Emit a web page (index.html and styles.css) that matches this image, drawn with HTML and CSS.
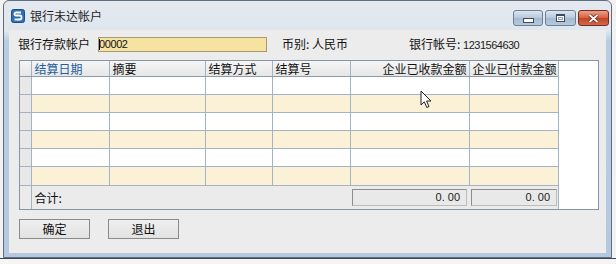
FILE: index.html
```html
<!DOCTYPE html>
<html>
<head>
  <title>银行未达帐户</title>
  <link rel="stylesheet" href="styles.css">
</head>
<body>

  <div class="window">
    <div class="titlebar">
      <svg class="app-icon" width="14" height="14" viewBox="0 0 14 14">
        <rect x="0.5" y="0.5" width="13" height="13" rx="2" fill="#2f6fb5" stroke="#1d4f86"/>
        <path d="M10 3.5 H5 Q3.5 3.5 3.5 5 Q3.5 6.5 5 6.5 H9 Q10.5 6.5 10.5 8.5 Q10.5 10.5 9 10.5 H3.5" fill="none" stroke="#fff" stroke-width="1.8"/>
      </svg>
      <span class="title">银行未达帐户</span>
      <div class="caption-buttons">
        <div class="cap min"><span></span></div>
        <div class="cap max"><span></span></div>
        <div class="cap close">
          <svg width="11" height="9" viewBox="0 0 11 9">
            <path d="M1.5 1 L9.5 8 M9.5 1 L1.5 8" stroke="#5a1a0c" stroke-width="3.2"/>
            <path d="M1.5 1 L9.5 8 M9.5 1 L1.5 8" stroke="#fff" stroke-width="1.8"/>
          </svg>
        </div>
      </div>
    </div>

    <div class="client">
      <div class="toolbar">
        <label>银行存款帐户</label>
        <div class="account"><span class="caret"></span>00002</div>
        <span class="currency">币别: 人民币</span>
        <span class="bank-no">银行帐号: <span class="num">1231564630</span></span>
      </div>

      <div class="grid">
        <table class="sheet">
          <colgroup>
            <col style="width: 11px">
            <col style="width: 78px">
            <col style="width: 96px">
            <col style="width: 67px">
            <col style="width: 78px">
            <col style="width: 119px">
            <col style="width: 89px">
          </colgroup>
          <tr class="head">
            <td class="rh"></td>
            <td class="active">结算日期</td>
            <td>摘要</td>
            <td>结算方式</td>
            <td>结算号</td>
            <td class="right">企业已收款金额</td>
            <td class="right">企业已付款金额</td>
          </tr>
          <tr><td class="rh"></td><td></td><td></td><td></td><td></td><td></td><td></td></tr>
          <tr class="alt"><td class="rh"></td><td></td><td></td><td></td><td></td><td></td><td></td></tr>
          <tr><td class="rh"></td><td></td><td></td><td></td><td></td><td></td><td></td></tr>
          <tr class="alt"><td class="rh"></td><td></td><td></td><td></td><td></td><td></td><td></td></tr>
          <tr><td class="rh"></td><td></td><td></td><td></td><td></td><td></td><td></td></tr>
          <tr class="alt last"><td class="rh"></td><td></td><td></td><td></td><td></td><td></td><td></td></tr>
          <tr class="total">
            <td class="rh"></td>
            <td colspan="4" class="sum-label">合计:</td>
            <td class="sum-cell"><div class="sum-box first">0. 00</div></td>
            <td class="sum-cell"><div class="sum-box">0. 00</div></td>
          </tr>
        </table>
        <div class="fill"></div>
      </div>

      <div class="actions">
        <button>确定</button>
        <button>退出</button>
      </div>
    </div>
  </div>

  <div class="desk"></div>

  <svg class="pointer" width="13" height="19" viewBox="0 0 13 19">
    <path d="M1 1 L1 15 L4.3 11.8 L6.8 17.5 L9 16.5 L6.6 11 L11 11 Z" fill="#fff" stroke="#222" stroke-width="1" stroke-linejoin="round"/>
  </svg>

</body>
</html>
```

FILE: styles.css
```css
body {
  margin: 0;
  width: 616px;
  height: 264px;
  overflow: hidden;
  background-color: #f2f2f2;
  font-family: "Noto Sans CJK SC", "Liberation Sans", sans-serif;
  font-size: 12px;
  color: #111;
  position: relative;
}

.window {
  margin-left: 3px;
  width: 609px;
  height: 258px;
  box-sizing: border-box;
  border: 1px solid #5f6f80;
  border-radius: 6px 6px 0 0;
  background: linear-gradient(#e4e9ef 0, #dfe6ee 30px, #b9cde2 40px, #b4c9df 100%);
}

.titlebar {
  height: 29px;
  display: flex;
  align-items: center;
  padding-left: 7px;
}

.app-icon {
  display: block;
  margin-top: 1px;
}

.title {
  margin-left: 5px;
  line-height: 14px;
  color: #1e1e1e;
}

.caption-buttons {
  margin-left: auto;
  margin-right: 2px;
  align-self: flex-start;
  margin-top: 9px;
  display: flex;
  gap: 2px;
}

.cap {
  height: 16px;
  box-sizing: border-box;
  border: 1px solid #6d7f95;
  border-radius: 3px;
  background: linear-gradient(#dbe5f1, #b7c8dc 50%, #a5b9d1 51%, #b6c9de);
  display: flex;
  align-items: center;
  justify-content: center;
}

.cap.min {
  width: 30px;
}

.cap.min span {
  width: 9px;
  height: 3px;
  margin-top: 4px;
  background: #fff;
  border: 1px solid #3b4a5c;
}

.cap.max {
  width: 31px;
}

.cap.max span {
  width: 7px;
  height: 5px;
  border: 1px solid #3b4a5c;
  border-top-width: 2px;
  background: #fff;
  box-shadow: inset 0 0 0 1px #fff, inset 0 0 0 2px #8ea0b5;
}

.cap.close {
  width: 31px;
  border-color: #7a2a1a;
  background: linear-gradient(#e9a08a, #d5603f 50%, #c34224 51%, #d2694a);
}

.cap.close svg {
  display: block;
}

.client {
  margin: 0 5px;
  height: 223px;
  background-color: #ececec;
  overflow: hidden;
}

.toolbar {
  margin-top: 4px;
  height: 20px;
  display: flex;
  align-items: center;
  padding-left: 9px;
  line-height: 14px;
}

.toolbar label {
  width: 72px;
}

.account {
  margin-left: 8px;
  width: 169px;
  height: 15px;
  box-sizing: border-box;
  background-color: #f6e3a1;
  border: 1px solid #a49a7a;
  font-family: "Liberation Sans", sans-serif;
  font-size: 11px;
  line-height: 13px;
  letter-spacing: -0.4px;
  display: flex;
  align-items: center;
}

.caret {
  width: 1px;
  height: 11px;
  background: #000;
  margin-right: -1px;
}

.currency {
  margin-left: 15px;
}

.bank-no {
  margin-left: 61px;
}

.num {
  font-family: "Liberation Sans", sans-serif;
  font-size: 11px;
  letter-spacing: -0.5px;
  color: #222;
}

.grid {
  margin: 6px 0 0 10px;
  width: 580px;
  box-sizing: border-box;
  border: 1px solid #8595a6;
  background-color: #fff;
  display: flex;
  align-items: flex-start;
}

.sheet {
  border-collapse: collapse;
  border-style: hidden;
  table-layout: fixed;
  width: 538px;
}

.sheet td {
  border: 1px solid #a3b3c4;
  height: 17px;
  padding: 0 3px;
  line-height: 14px;
  white-space: nowrap;
  overflow: hidden;
}

.sheet tr.head td {
  height: 15px;
  background: linear-gradient(#f5f5f5, #e6e6e6);
  border-bottom-color: #8d9cad;
}

.sheet td.active {
  color: #1f5d9b;
}

.sheet td.right {
  text-align: right;
  padding-right: 2px;
}

.sheet tr.alt td {
  background-color: #fbf1d6;
}

.sheet tr.last td {
  height: 18px;
}

.sheet td.rh,
.sheet tr.alt td.rh {
  background-color: #e8e8e8;
  padding: 0;
}

.sheet tr.total td {
  height: 23px;
  background-color: #ebebeb;
  border-top-color: #8d9cad;
  border-left-style: none;
  border-right-style: none;
}

.sheet tr.total td.rh {
  border-right: 1px solid #a3b3c4;
}

.sum-label {
  padding-left: 2px;
}

.sheet td.sum-cell {
  padding: 0 1px 0 2px;
}

.sum-box {
  height: 17px;
  box-sizing: border-box;
  border: 1px solid #8e8e8e;
  border-right-color: #bdbdbd;
  border-bottom-color: #bdbdbd;
  background-color: #e9e9e9;
  text-align: right;
  padding-right: 6px;
  font-family: "Liberation Sans", sans-serif;
  font-size: 11px;
  line-height: 15px;
  color: #222;
}

.sum-box.first {
  margin-right: 1px;
}

.fill {
  flex: 1;
  align-self: stretch;
  border-left: 1px solid #a3b3c4;
}

.actions {
  margin: 9px 0 0 10px;
  display: flex;
  gap: 18px;
}

.actions button {
  width: 71px;
  height: 20px;
  border: 1px solid #8a8a8a;
  background: linear-gradient(#efefef, #e2e2e2);
  font-family: "Noto Sans CJK SC", sans-serif;
  font-size: 12px;
  line-height: 14px;
  color: #111;
  padding: 0;
}

.desk {
  height: 6px;
  border-top: 1px solid #3b4652;
  background-color: #f5f5f5;
}

.pointer {
  position: absolute;
  left: 420px;
  top: 90px;
}
```
